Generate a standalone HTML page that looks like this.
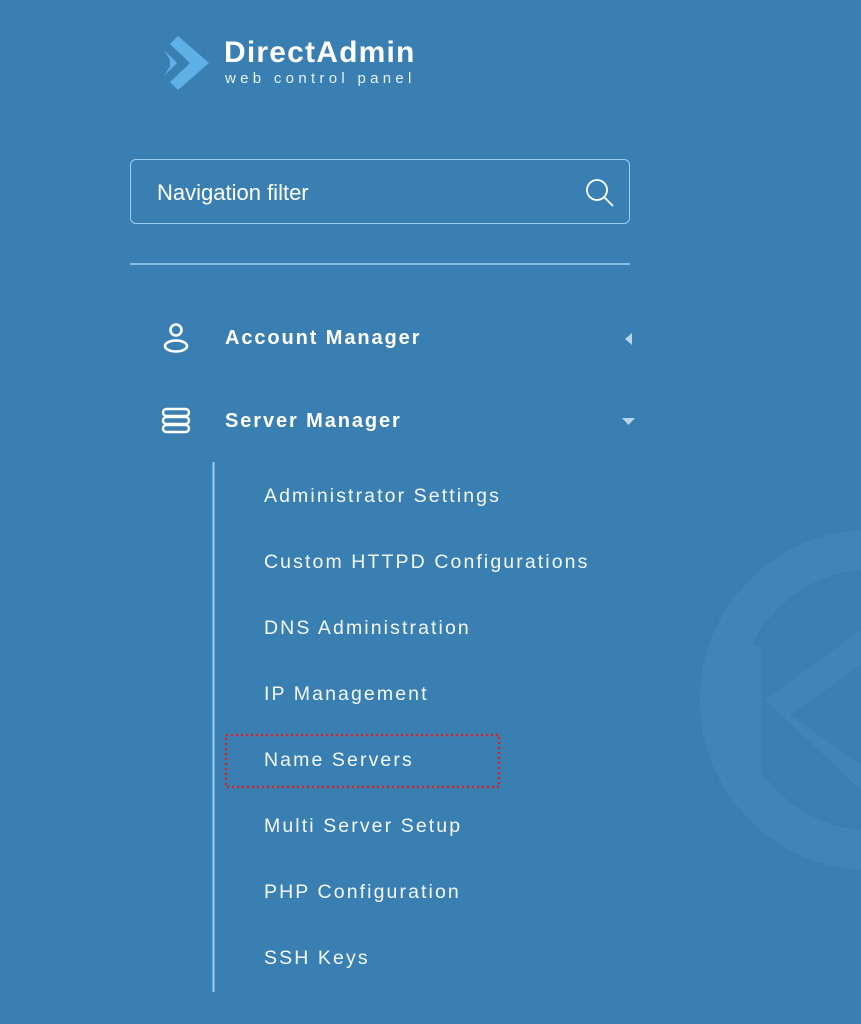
<!DOCTYPE html><html><head><style>
body{margin:0;width:861px;height:1024px;background:#3a7fb1;font-family:"Liberation Sans",sans-serif;color:#fff;position:relative;overflow:hidden}
.a{position:absolute}
.sub{position:absolute;left:264px;font-size:19.5px;letter-spacing:2.1px;color:#f4f8fb}
.h{position:absolute;left:225px;font-size:20px;font-weight:bold;letter-spacing:1.9px}
</style></head><body>
<svg class="a" style="left:0;top:0" width="861" height="1024">
<circle cx="870" cy="700" r="150" fill="none" stroke="#3f85b8" stroke-width="40"/>
<circle cx="870" cy="700" r="125" fill="#3b80b2"/>
<rect x="740" y="645" width="22" height="140" rx="8" fill="#3f85b8"/>
<path d="M765 700 L861 630 L861 665 L790 715 L861 765 L861 790 Z" fill="#3f85b8"/>
<path d="M178 36 L209 63 L178 90 L170 82 L190 63 L170 44Z" fill="#5fb0e6"/>
<path d="M164 50 L177 63 L164 76 L172 63Z" fill="#5fb0e6"/>
<path d="M170 56 L177 63 L170 70Z" fill="#5fb0e6"/>
<circle cx="176" cy="330" r="5.5" fill="none" stroke="#fff" stroke-width="2.6"/>
<ellipse cx="176" cy="346" rx="11" ry="5.5" fill="none" stroke="#fff" stroke-width="2.6"/>
<g fill="none" stroke="#fff" stroke-width="2.4"><rect x="163" y="409" width="26" height="7" rx="3.5"/><rect x="163" y="417" width="26" height="7" rx="3.5"/><rect x="163" y="425" width="26" height="7" rx="3.5"/></g>
<path d="M632 333 L632 345 L625 339Z" fill="#b8d4ea"/>
<path d="M622 418 L635 418 L628.5 425Z" fill="#b8d4ea"/>
<circle cx="597" cy="190" r="10" fill="none" stroke="#fff" stroke-width="1.8"/>
<path d="M604 197 L613 206" stroke="#fff" stroke-width="1.8"/>
<line x1="213.5" y1="462" x2="213.5" y2="992" stroke="#9ad0f3" stroke-width="2"/>
<line x1="130" y1="264" x2="630" y2="264" stroke="#9ad0f3" stroke-width="1.5"/>
<rect x="226" y="735" width="273" height="52" fill="none" stroke="#e02020" stroke-width="2.4" stroke-dasharray="2 3"/>
</svg>
<div class="a" style="left:224px;top:36px;font-size:30px;font-weight:bold;letter-spacing:1.2px">DirectAdmin</div>
<div class="a" style="left:225px;top:70px;font-size:15px;letter-spacing:4.3px;color:#e8f1f8">web control panel</div>
<div class="a" style="left:130px;top:159px;width:498px;height:63px;border:1.5px solid #9ad0f3;border-radius:6px"></div>
<div class="a" style="left:157px;top:180px;font-size:22px">Navigation filter</div>
<div class="h" style="top:327px">Account Manager</div>
<div class="h" style="top:410px">Server Manager</div>
<div class="sub" style="top:485px">Administrator Settings</div>
<div class="sub" style="top:551px">Custom HTTPD Configurations</div>
<div class="sub" style="top:617px">DNS Administration</div>
<div class="sub" style="top:683px">IP Management</div>
<div class="sub" style="top:749px">Name Servers</div>
<div class="sub" style="top:815px">Multi Server Setup</div>
<div class="sub" style="top:881px">PHP Configuration</div>
<div class="sub" style="top:947px">SSH Keys</div>
</body></html>
